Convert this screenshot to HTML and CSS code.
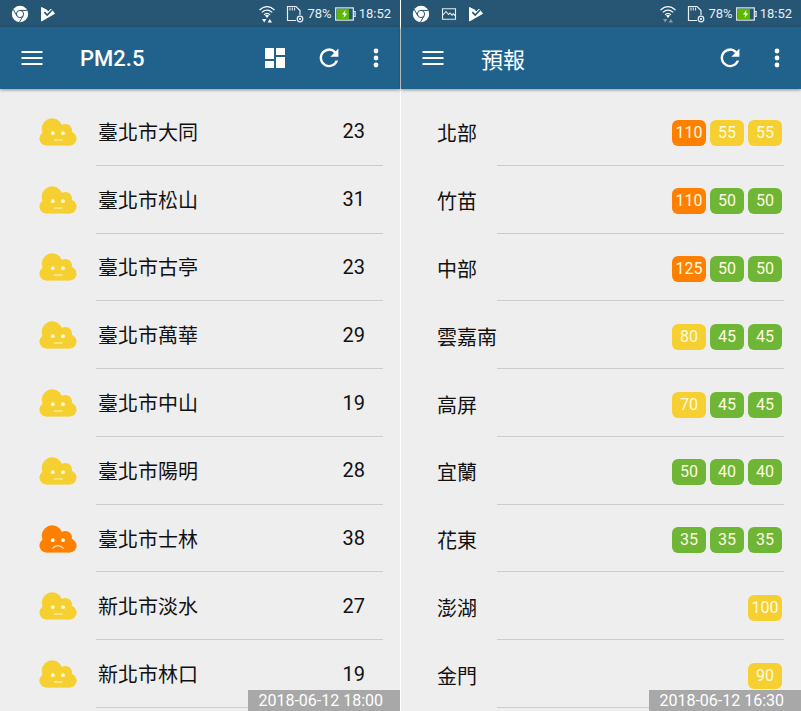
FILE: index.html
```html
<!DOCTYPE html>
<html lang="zh-Hant">
<head>
    <meta charset="UTF-8">
    <meta name="viewport" content="width=device-width, initial-scale=1.0">
    <title>PM2.5</title>
    <link rel="stylesheet" href="styles.css">
</head>
<body>
    <svg class="symbols" aria-hidden="true">
        <symbol id="chrome" viewBox="0 0 18 18">
            <circle cx="9" cy="9" r="8.2" fill="#fff"/>
            <g fill="none" stroke="#265674" stroke-width="1">
                <circle cx="9" cy="9" r="3.6"/>
                <path d="M9 5.4h7.4M5.9 10.8L2.2 4.4M12.1 10.8L8.4 17.2"/>
            </g>
        </symbol>
        <symbol id="play" viewBox="0 0 16 16">
            <path d="M1.5 1.5L7 4.3L8 6L11 3.2L14.5 7.5L1.5 15Z" fill="#fff" stroke="#fff" stroke-linejoin="round"/>
            <path d="M4.3 6.2l2.9 2.8L12 4" fill="none" stroke="#265674" stroke-width="1.6"/>
        </symbol>
        <symbol id="photo" viewBox="0 0 16 16">
            <path d="M1.5 2.8h13v10.4h-13zM1.5 9.5L5 5.5l2.5 3 1.5-1.5 2 2.2 1.3-1.4 2.2 2.2" fill="none" stroke="#e8eef2" stroke-width="1.1"/>
        </symbol>
        <symbol id="wifi" viewBox="0 0 16 18">
            <g fill="none" stroke="#fff" stroke-width="1.2">
                <path d="M.5 5Q8-1.6 15.5 5M2.8 7.4Q8 2.8 13.2 7.4M5 9.7Q8 7 11 9.7"/>
            </g>
            <path d="M6 10.6Q8 9 10 10.6L8 13z" fill="#fff"/>
            <path class="traffic" d="M3 14h4.4l-2.2 3.4zM8.6 17.4H13L10.8 14z"/>
        </symbol>
        <symbol id="sdcard" viewBox="0 0 18 18">
            <path d="M10 15.5H1.5v-14h8.5l4 4V10" fill="none" stroke="#e8eef2" stroke-width="1.2"/>
            <path d="M4 2.5v3M6.3 2.5v3M8.6 2.5v3" stroke="#e8eef2"/>
            <circle cx="14" cy="14" r="2.8" fill="none" stroke="#e8eef2" stroke-width="1.2"/>
            <path d="M12.8 12.8l2.4 2.4M15.2 12.8l-2.4 2.4" stroke="#e8eef2" stroke-width=".9"/>
        </symbol>
        <symbol id="battery" viewBox="0 0 21 14">
            <rect x=".7" y=".9" width="17.6" height="12.2" fill="none" stroke="#e8eef2" stroke-width="1.2"/>
            <rect x="1.7" y="1.9" width="12.3" height="10.2" fill="#5eb800"/>
            <path d="M18.5 4.5h1.6v5h-1.6" fill="none" stroke="#e8eef2" stroke-width="1.2"/>
            <path d="M10.6 3L7 7.4h2.4L8.4 11l3.8-4.6H9.8z" fill="#fff"/>
        </symbol>
        <symbol id="menu" viewBox="0 0 24 24">
            <path d="M1.5 6h21M1.5 12h21M1.5 18h21" stroke="#fff" stroke-width="2"/>
        </symbol>
        <symbol id="dashboard" viewBox="0 0 24 24">
            <path d="M2 2h9v11H2zM2 15h9v7H2zM13 2h9v7h-9zM13 11h9v11h-9z" fill="#fff"/>
        </symbol>
        <symbol id="refresh" viewBox="0 0 24 24">
            <path d="M18.8 5.2A9.4 9.4 0 1 0 21.1 14.4h-2.5a7 7 0 1 1-1.5-7.4l-3.8 3.8H21.4V2.6z" fill="#fff"/>
        </symbol>
        <symbol id="more" viewBox="0 0 24 24">
            <g fill="#fff">
                <circle cx="12" cy="5" r="2.4"/>
                <circle cx="12" cy="12" r="2.4"/>
                <circle cx="12" cy="19" r="2.4"/>
            </g>
        </symbol>
        <symbol id="cloud" viewBox="0 0 38 28">
            <g fill="currentColor">
                <circle cx="13.2" cy="10.8" r="10.5"/>
                <circle cx="26.3" cy="12.6" r="6.7"/>
                <circle cx="7.4" cy="20.6" r="7"/>
                <circle cx="30.6" cy="20.6" r="7"/>
                <path d="M7.4 12h23.2v15.6H7.4z"/>
            </g>
            <circle cx="13.8" cy="15.2" r="1.9" fill="#fff8d8"/>
            <circle cx="24" cy="15.2" r="1.9" fill="#fff8d8"/>
        </symbol>
        <symbol id="normal" viewBox="0 0 38 28">
            <use href="#cloud"/>
            <path d="M15 22h8.5" stroke="#fdeeb0" stroke-width="1.3"/>
        </symbol>
        <symbol id="sad" viewBox="0 0 38 28">
            <use href="#cloud"/>
            <path d="M13.2 23.6Q19 17.6 24.8 23.6" fill="none" stroke="#ffe0c0" stroke-width="1.3"/>
        </symbol>
    </svg>

    <section class="screen">
        <div class="status-bar">
            <svg class="icon-chrome"><use href="#chrome"/></svg>
            <svg class="icon-small"><use href="#play"/></svg>
            <div class="status-right">
                <svg class="icon-wifi"><use href="#wifi"/></svg>
                <svg class="icon-sd"><use href="#sdcard"/></svg>
                <span>78%</span>
                <svg class="icon-battery"><use href="#battery"/></svg>
                <span>18:52</span>
            </div>
        </div>
        <header class="app-bar">
            <button class="menu" aria-label="選單"><svg><use href="#menu"/></svg></button>
            <h1>PM2.5</h1>
            <button aria-label="版面"><svg><use href="#dashboard"/></svg></button>
            <button aria-label="重新整理"><svg><use href="#refresh"/></svg></button>
            <button class="more" aria-label="更多"><svg><use href="#more"/></svg></button>
        </header>
        <ul class="list stations">
            <li><svg class="face"><use href="#normal"/></svg><div class="row"><span>臺北市大同</span><span>23</span></div></li>
            <li><svg class="face"><use href="#normal"/></svg><div class="row"><span>臺北市松山</span><span>31</span></div></li>
            <li><svg class="face"><use href="#normal"/></svg><div class="row"><span>臺北市古亭</span><span>23</span></div></li>
            <li><svg class="face"><use href="#normal"/></svg><div class="row"><span>臺北市萬華</span><span>29</span></div></li>
            <li><svg class="face"><use href="#normal"/></svg><div class="row"><span>臺北市中山</span><span>19</span></div></li>
            <li><svg class="face"><use href="#normal"/></svg><div class="row"><span>臺北市陽明</span><span>28</span></div></li>
            <li><svg class="face bad"><use href="#sad"/></svg><div class="row"><span>臺北市士林</span><span>38</span></div></li>
            <li><svg class="face"><use href="#normal"/></svg><div class="row"><span>新北市淡水</span><span>27</span></div></li>
            <li><svg class="face"><use href="#normal"/></svg><div class="row"><span>新北市林口</span><span>19</span></div></li>
        </ul>
        <div class="time">2018-06-12 18:00</div>
    </section>

    <section class="screen">
        <div class="status-bar">
            <svg class="icon-chrome"><use href="#chrome"/></svg>
            <svg class="icon-small"><use href="#photo"/></svg>
            <svg class="icon-small"><use href="#play"/></svg>
            <div class="status-right">
                <svg class="icon-wifi idle"><use href="#wifi"/></svg>
                <svg class="icon-sd"><use href="#sdcard"/></svg>
                <span>78%</span>
                <svg class="icon-battery"><use href="#battery"/></svg>
                <span>18:52</span>
            </div>
        </div>
        <header class="app-bar">
            <button class="menu" aria-label="選單"><svg><use href="#menu"/></svg></button>
            <h1 class="light">預報</h1>
            <button aria-label="重新整理"><svg><use href="#refresh"/></svg></button>
            <button class="more" aria-label="更多"><svg><use href="#more"/></svg></button>
        </header>
        <ul class="list forecast">
            <li><span class="area">北部</span><div class="row"><b class="orange">110</b><b class="yellow">55</b><b class="yellow">55</b></div></li>
            <li><span class="area">竹苗</span><div class="row"><b class="orange">110</b><b class="green">50</b><b class="green">50</b></div></li>
            <li><span class="area">中部</span><div class="row"><b class="orange">125</b><b class="green">50</b><b class="green">50</b></div></li>
            <li><span class="area">雲嘉南</span><div class="row"><b class="yellow">80</b><b class="green">45</b><b class="green">45</b></div></li>
            <li><span class="area">高屏</span><div class="row"><b class="yellow">70</b><b class="green">45</b><b class="green">45</b></div></li>
            <li><span class="area">宜蘭</span><div class="row"><b class="green">50</b><b class="green">40</b><b class="green">40</b></div></li>
            <li><span class="area">花東</span><div class="row"><b class="green">35</b><b class="green">35</b><b class="green">35</b></div></li>
            <li><span class="area">澎湖</span><div class="row"><b class="yellow">100</b></div></li>
            <li><span class="area">金門</span><div class="row"><b class="yellow">90</b></div></li>
        </ul>
        <div class="time">2018-06-12 16:30</div>
    </section>
</body>
</html>
```
FILE: styles.css
```css
* {
    box-sizing: border-box;
}
body {
    margin: 0;
    min-height: 100vh;
    display: grid;
    grid-template-columns: 1fr 1fr;
    gap: 1px;
    background: #fff;
    color: #111;
    font-family: Roboto, "Noto Sans CJK TC", sans-serif;
    font-size: 20px;
}
.symbols {
    display: none;
}
.screen {
    position: relative;
    display: flex;
    flex-direction: column;
    background: #eee;
}

/* status bar */
.status-bar {
    height: 27px;
    padding: 0 9px 0 11px;
    display: flex;
    align-items: center;
    gap: 11px;
    background: #265674;
    color: #e8eef2;
    font-size: 13px;
}
.status-right {
    margin-left: auto;
    display: flex;
    align-items: center;
    gap: 3px;
}
.icon-chrome {
    width: 18px;
    height: 18px;
}
.icon-small {
    width: 16px;
    height: 16px;
}
.icon-wifi {
    width: 16px;
    height: 18px;
    margin-right: 8px;
    fill: #fff;
}
.icon-wifi.idle {
    fill: #7f9bad;
}
.icon-sd {
    width: 18px;
    height: 18px;
}
.icon-battery {
    width: 21px;
    height: 14px;
}

/* app bar */
.app-bar {
    height: 62px;
    padding: 0 4px 0 16px;
    display: flex;
    align-items: center;
    background: #20628c;
    color: #fff;
    box-shadow: 0 1px 3px rgba(0, 0, 0, 0.4);
}
.app-bar h1 {
    flex: 1;
    margin: 0 0 0 32px;
    font-size: 22px;
    font-weight: 500;
}
.app-bar .light {
    font-weight: 400;
}
.app-bar button {
    width: 54px;
    height: 48px;
    padding: 0;
    border: 0;
    background: none;
    cursor: pointer;
}
.app-bar .menu {
    width: 32px;
}
.app-bar .more {
    width: 40px;
}
.app-bar svg {
    display: block;
    width: 24px;
    height: 24px;
    margin: auto;
}

/* lists */
.list {
    flex: 1;
    margin: 0;
    padding: 9px 17px 3px 0;
    display: flex;
    flex-direction: column;
    list-style: none;
}
.list li {
    flex: 1;
    min-height: 56px;
    display: flex;
    align-items: center;
}
.row {
    flex: 1;
    align-self: stretch;
    display: flex;
    align-items: center;
    border-bottom: 1px solid #ccc;
}
.stations .row {
    justify-content: space-between;
    padding: 0 18px 0 2px;
}
.face {
    width: 38px;
    height: 28px;
    margin: 0 19px 0 39px;
    color: #f6cf30;
}
.face.bad {
    color: #ff8000;
}
.area {
    width: 96px;
    padding: 2px 0 0 36px;
    white-space: nowrap;
}
.forecast .row {
    justify-content: flex-end;
    gap: 4px;
    padding: 4px 2px 0 0;
}
.row b {
    width: 34px;
    border-radius: 6px;
    color: #fffbe0;
    font-size: 16px;
    font-weight: 400;
    line-height: 26px;
    text-align: center;
}
.orange {
    background: #ff8000;
}
.yellow {
    background: #f6cf30;
}
.green {
    background: #6fb536;
}

/* update time */
.time {
    position: absolute;
    right: 0;
    bottom: 0;
    padding: 0 17px 0 10px;
    background: #a8a8a8;
    color: #fff;
    font-size: 16px;
    line-height: 21px;
}
```
